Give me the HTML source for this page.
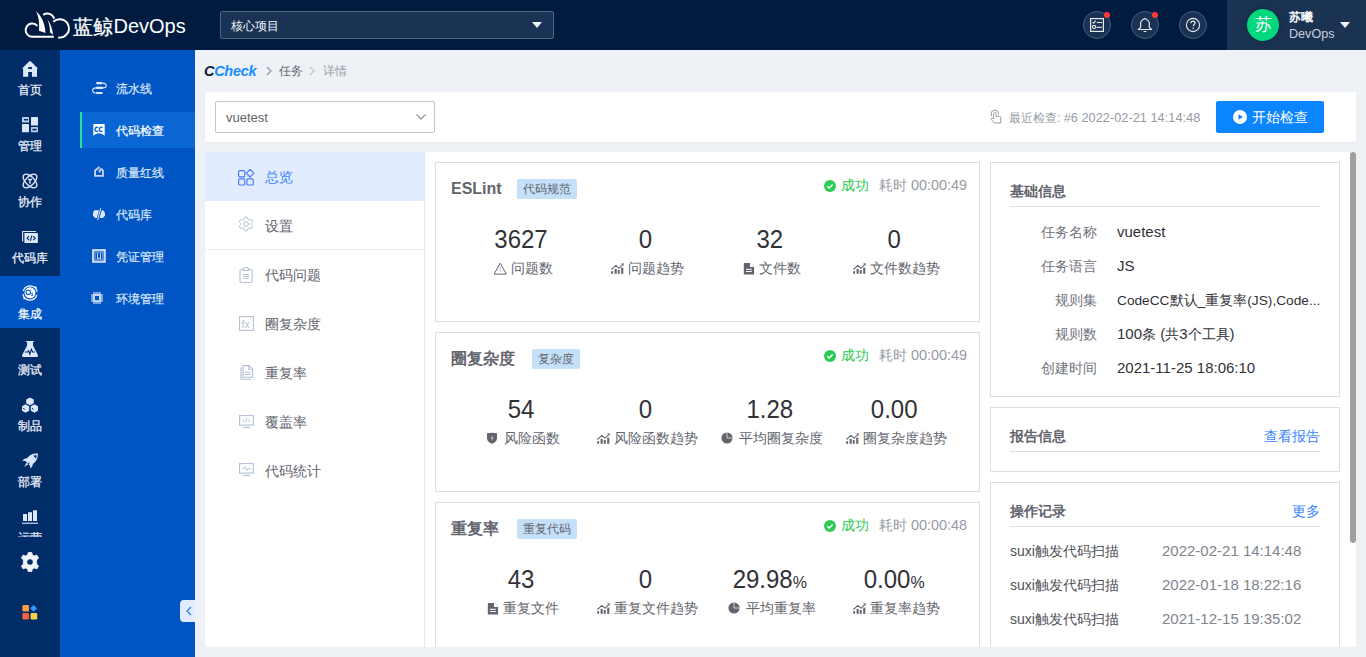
<!DOCTYPE html>
<html><head><meta charset="utf-8">
<style>
*{box-sizing:border-box;margin:0;padding:0}
html,body{width:1366px;height:657px;overflow:hidden}
body{position:relative;background:#eef1f5;font-family:"Liberation Sans",sans-serif;color:#63656e}
.a{position:absolute}
svg{display:block}
#hdr{left:0;top:0;width:1366px;height:50px;background:#001b3f}
#nav{left:0;top:50px;width:60px;height:607px;background:#002c67}
#sub{left:60px;top:50px;width:135px;height:607px;background:#0055c5}
.ni{left:0;width:60px;height:56px;text-align:center}
.ni .lb{position:absolute;left:0;width:60px;top:30px;line-height:20px;font-size:12px;color:#eef3fc;-webkit-text-stroke:0.25px #eef3fc}
.ni svg{position:absolute;left:22px;top:11px}
.si{left:20px;width:115px;height:36px;font-size:12px;line-height:36px;color:#dde8fa}
.si .t{-webkit-text-stroke:0.2px currentColor}
.si .t{position:absolute;left:36px;top:1px}
.si svg{position:absolute;left:12px;top:11px}
</style></head>
<body>
<!-- header -->
<div class="a" id="hdr">
  <svg class="a" style="left:22px;top:8px" width="50" height="34" viewBox="0 0 50 34">
    <path d="M15.4 17.9 A6.6 6.6 0 1 0 10.4 28.7 L31.8 28.7" fill="none" stroke="#fff" stroke-width="1.9"/>
    <path d="M31.3 13.8 A9.2 9.2 0 1 1 36.2 29.5" fill="none" stroke="#fff" stroke-width="1.9"/>
    <path d="M21.2 6.8 C25 4.6 30.5 5.2 32.2 10.6" fill="none" stroke="#fff" stroke-width="2"/>
    <path d="M14 3.6 C19 7 23 15 23.5 25 L17 22.8 C17.5 16 17 9 14 3.6 Z" fill="#fff"/>
    <path d="M25.1 11.1 C28.5 15 30.5 21 31 26.9 L28 24.3 C28 19 27 14.5 25.1 11.1 Z" fill="#fff"/>
  </svg>
  <div class="a" style="left:73px;top:15px;font-size:19.5px;line-height:24px;color:#fff;white-space:nowrap;-webkit-text-stroke:0.3px #fff">蓝鲸</div><div class="a" style="left:113.5px;top:14px;font-size:20px;line-height:24px;color:#fff;white-space:nowrap">DevOps</div>
  <div class="a" style="left:220px;top:11px;width:334px;height:28px;border:1px solid #53657e;border-radius:2px;background:#1a3253"></div>
  <div class="a" style="left:231px;top:16px;font-size:12px;line-height:20px;color:#f0f4fa">核心项目</div>
  <div class="a" style="left:532px;top:22px;width:0;height:0;border-left:5px solid transparent;border-right:5px solid transparent;border-top:6px solid #f0f4fa"></div>
  <!-- icons -->
  <div class="a" style="left:1083px;top:11px;width:28px;height:28px;border-radius:50%;border:1px solid #4a5d78;background:#1a3253"></div>
  <div class="a" style="left:1131px;top:11px;width:28px;height:28px;border-radius:50%;border:1px solid #4a5d78;background:#1a3253"></div>
  <div class="a" style="left:1179px;top:11px;width:28px;height:28px;border-radius:50%;border:1px solid #4a5d78;background:#1a3253"></div>
  <svg class="a" style="left:1089px;top:17px" width="16" height="16" viewBox="0 0 16 16">
    <rect x="1.6" y="1.6" width="12.8" height="12.8" fill="none" stroke="#e6e9ee" stroke-width="1.2"/>
    <path d="M3.5 5 L4.6 6.2 L6.8 3.6" fill="none" stroke="#e6e9ee" stroke-width="1.1"/>
    <line x1="7.8" y1="5.5" x2="13" y2="5.5" stroke="#e6e9ee" stroke-width="1.1"/>
    <circle cx="5" cy="10" r="1.6" fill="none" stroke="#e6e9ee" stroke-width="1.1"/>
    <line x1="7.3" y1="10.3" x2="13" y2="10.3" stroke="#e6e9ee" stroke-width="1.1"/>
  </svg>
  <svg class="a" style="left:1137px;top:17px" width="16" height="16" viewBox="0 0 16 16"><path d="M7.9 1.4 C6.2 2.6 4.2 3.4 3.6 5.6 V10.4 L1.4 12.5 H14.6 L12.3 10.4 V5.6 C11.7 3.4 9.7 2.6 7.9 1.4 Z" fill="none" stroke="#e6e9ee" stroke-width="1.2" stroke-linejoin="round"/><path d="M6.2 14 C6.7 15.3 9.3 15.3 9.8 14 Z" fill="#e6e9ee"/></svg>
  <svg class="a" style="left:1185px;top:17px" width="16" height="16" viewBox="0 0 16 16">
    <circle cx="8" cy="8" r="6.6" fill="none" stroke="#e6e9ee" stroke-width="1.1"/>
    <path d="M6 6.3 C6 4.9 7 4.2 8 4.2 C9.2 4.2 10 5 10 6 C10 7.3 8.3 7.5 8.3 9.2" fill="none" stroke="#e6e9ee" stroke-width="1.2"/>
    <circle cx="8.2" cy="11.3" r="0.8" fill="#e6e9ee"/>
  </svg>
  <div class="a" style="left:1104px;top:12px;width:6px;height:6px;border-radius:50%;background:#ff3a3a"></div>
  <div class="a" style="left:1152px;top:12px;width:6px;height:6px;border-radius:50%;background:#ff3a3a"></div>
  <!-- user -->
  <div class="a" style="left:1227px;top:0;width:139px;height:50px;background:#1b3353"></div>
  <div class="a" style="left:1247px;top:9px;width:32px;height:32px;border-radius:50%;background:#00d87e;box-shadow:0 0 6px rgba(0,0,0,.25);color:#fff;font-size:17px;line-height:32px;text-align:center">苏</div>
  <div class="a" style="left:1289px;top:8px;font-size:12px;line-height:18px;color:#fff;font-weight:bold">苏曦</div>
  <div class="a" style="left:1289px;top:25px;font-size:12.6px;line-height:18px;color:#c8d0db">DevOps</div>
  <div class="a" style="left:1340px;top:22px;width:0;height:0;border-left:5px solid transparent;border-right:5px solid transparent;border-top:6px solid #f0f4fa"></div>
</div>

<!-- left icon nav -->
<div class="a" id="nav">
  <div class="a" style="left:0;top:226px;width:60px;height:52px;background:#0055c5"></div>
  <div style="position:absolute;left:0;top:0;width:60px;height:487px;overflow:hidden">
    <div class="a ni" style="top:0">
      <svg width="16" height="16" viewBox="0 0 16 16"><path d="M8 -0.3 L16 7.6 H15 V15.8 H10 V11 H6.2 V15.8 H1.1 V7.6 H0 Z" fill="#dce7fb"/><rect x="6.2" y="6.1" width="3.8" height="1.9" fill="#002c67"/></svg>
      <div class="lb">首页</div>
    </div>
    <div class="a ni" style="top:56px">
      <svg width="16" height="16" viewBox="0 0 16 16"><rect x="0" y="0" width="7" height="5.6" rx="0.6" fill="#dce7fb" opacity="0.85"/><rect x="2" y="2" width="4" height="1.4" fill="#002c67"/><rect x="9" y="0" width="7" height="8.6" rx="0.6" fill="#dce7fb"/><rect x="0" y="7" width="7" height="8.3" rx="0.6" fill="#dce7fb"/><rect x="9" y="10" width="7" height="5.3" rx="0.6" fill="#dce7fb" opacity="0.85"/><rect x="10.5" y="11.8" width="4" height="1.6" fill="#002c67"/></svg>
      <div class="lb">管理</div>
    </div>
    <div class="a ni" style="top:112px">
      <svg width="16" height="16" viewBox="0 0 16 16"><ellipse cx="8" cy="8" rx="8.6" ry="4.4" transform="rotate(45 8 8)" fill="none" stroke="#dce7fb" stroke-width="1.4"/><ellipse cx="8" cy="8" rx="8.6" ry="4.4" transform="rotate(-45 8 8)" fill="none" stroke="#dce7fb" stroke-width="1.4"/><path d="M6 6.5 H10 M8 6.5 V10.7" stroke="#dce7fb" stroke-width="1.4"/></svg>
      <div class="lb">协作</div>
    </div>
    <div class="a ni" style="top:168px">
      <svg width="16" height="16" viewBox="0 0 16 16"><path d="M0.6 12.5 V2.5 H14" fill="none" stroke="#dce7fb" stroke-width="1.1"/><rect x="2.4" y="4.1" width="13.5" height="9.9" rx="0.5" fill="#dce7fb"/><path d="M7 7.2 L5 9.2 L7 11.2 M11.2 7.2 L13.2 9.2 L11.2 11.2 M9.8 6.6 L8.4 11.8" fill="none" stroke="#002c67" stroke-width="1.1"/></svg>
      <div class="lb">代码库</div>
    </div>
    <div class="a ni" style="top:224px">
      <svg width="16" height="16" viewBox="0 0 16 16"><path d="M13.5 3.2 A7.3 7.3 0 0 0 1.2 6 M0.9 9.2 A7.3 7.3 0 0 0 2.5 12.8 M2.5 12.8 A7.3 7.3 0 0 0 14.8 10 M15.1 6.8 A7.3 7.3 0 0 0 13.5 3.2" fill="none" stroke="#fff" stroke-width="1.2"/><path d="M12 1.5 L14.6 1.6 L14.4 4.2 Z M4 14.3 L1.4 14.2 L1.6 11.6 Z" fill="#fff"/><circle cx="8" cy="7.8" r="5.5" fill="#fff"/><rect x="4.2" y="5.2" width="4.2" height="4.2" rx="1.4" fill="none" stroke="#0055c5" stroke-width="1.1"/><path d="M11 8.2 C10 7.8 9.2 8.2 9.5 8.9 C9.8 9.5 11 9.4 10.9 10.1 C10.8 10.8 9.8 10.8 9 10.4" fill="none" stroke="#0055c5" stroke-width="1"/></svg>
      <div class="lb" style="color:#fff">集成</div>
    </div>
    <div class="a ni" style="top:280px">
      <svg width="16" height="16" viewBox="0 0 16 16"><path d="M3.9 0.1 H11.9 V1 H11 V4.5 L15.6 13.5 C16.3 14.8 15.8 16 14.5 16 H1.5 C0.2 16 -0.3 14.8 0.4 13.5 L5.1 4.5 V1 H3.9 Z" fill="#dce7fb"/><path d="M2.9 11 H5.5 L6.6 9.8 L7.8 13.2 L9.4 8.2 L10.6 11 H12.8" fill="none" stroke="#002c67" stroke-width="1.1"/></svg>
      <div class="lb">测试</div>
    </div>
    <div class="a ni" style="top:336px">
      <svg width="16" height="16" viewBox="0 0 16 16"><path d="M8 0.4 L11.8 2.4 V6.2 L8 8.2 L4.2 6.2 V2.4 Z" fill="#dce7fb"/><path d="M3.6 7.3 L7.2 9.3 V13.7 L3.6 15.8 L0 13.7 V9.3 Z" fill="#dce7fb"/><path d="M12.4 7.3 L16 9.3 V13.7 L12.4 15.8 L8.8 13.7 V9.3 Z" fill="#dce7fb"/><path d="M1.3 11 L2.6 12.6" stroke="#002c67" stroke-width="1"/><path d="M10.1 11 L11.4 12.6" stroke="#002c67" stroke-width="1"/></svg>
      <div class="lb">制品</div>
    </div>
    <div class="a ni" style="top:392px">
      <svg width="16" height="16" viewBox="0 0 16 16"><path d="M15.8 0.6 C11.5 0 7.5 1.8 5 5.2 L3.2 5.5 L0 7.6 L3.8 8.2 L7.8 12.2 L8.5 15.8 L10.5 12.7 L10.9 11 C14.2 8.5 16.2 4.8 15.8 0.6 Z" fill="#dce7fb"/><path d="M11.3 2.8 C12.4 2.4 13.6 2.3 14.6 2.3 C14.6 3.3 14.4 4.4 14 5.4 Z" fill="#002c67"/><path d="M4.8 9.5 L2.2 13.8 L6.5 11.2 Z" fill="#dce7fb"/><path d="M7.3 9.5 L6.2 11" stroke="#002c67" stroke-width="1"/></svg>
      <div class="lb">部署</div>
    </div>
    <div class="a ni" style="top:448px">
      <svg width="16" height="16" viewBox="0 0 16 16"><rect x="1" y="5" width="4" height="7" fill="#dce7fb"/><rect x="6" y="3.2" width="4" height="8.8" fill="#dce7fb"/><rect x="11" y="1.3" width="4" height="10.7" fill="#dce7fb"/><rect x="0" y="13.6" width="16" height="1.4" fill="#dce7fb" opacity="0.8"/></svg>
      <div class="lb">运营</div>
    </div>
  </div>
  <svg class="a" style="left:20px;top:502px" width="20" height="20" viewBox="0 0 20 20"><path d="M8.3 0.2 H11.7 L12.3 2.8 L14.4 4 L16.9 3.1 L18.6 6.1 L16.6 7.9 V12.1 L18.6 13.9 L16.9 16.9 L14.4 16 L12.3 17.2 L11.7 19.8 H8.3 L7.7 17.2 L5.6 16 L3.1 16.9 L1.4 13.9 L3.4 12.1 V7.9 L1.4 6.1 L3.1 3.1 L5.6 4 L7.7 2.8 Z" fill="#eef3fc" stroke="#eef3fc" stroke-width="0.8" stroke-linejoin="round"/><circle cx="10" cy="10" r="2.8" fill="#002c67"/></svg>
  <svg class="a" style="left:22px;top:555px" width="16" height="15" viewBox="0 0 16 15">
    <rect x="0.4" y="0" width="6.6" height="6.6" rx="1.3" fill="#ff9a47"/>
    <rect x="9.1" y="0.9" width="5" height="5" rx="1" transform="rotate(45 11.6 3.4)" fill="#2b9bf4"/>
    <rect x="0.4" y="8" width="6.6" height="6.6" rx="1.3" fill="#f8603f"/>
    <rect x="8.6" y="8" width="6.6" height="6.6" rx="1.3" fill="#ffd146"/>
  </svg>
</div>

<!-- sub nav -->
<div class="a" id="sub">
  <div class="a si" style="top:20px">
    <svg width="15" height="15" viewBox="0 0 15 15" style="left:11.5px;top:11px"><path d="M5.1 2.1 H9.6 M4.8 6.9 H10.2 M4.7 12 H9.8" stroke="#dde8fa" stroke-width="2.2" stroke-linecap="round"/><path d="M10.5 2.1 C13 2.1 14.2 3.2 14.2 4.5 C14.2 5.8 13 6.9 11 6.9 M4 6.9 C1.8 6.9 0.6 8.1 0.6 9.45 C0.6 10.8 1.8 12 3.6 12" fill="none" stroke="#dde8fa" stroke-width="1.1"/></svg>
    <span class="t">流水线</span>
  </div>
  <div class="a si" style="top:62px;background:#0a66d3;color:#fff">
    <div class="a" style="left:0;top:0;width:2px;height:36px;background:#20e3a1"></div>
    <svg width="12" height="12" viewBox="0 0 12 12" style="left:13px;top:12px"><path d="M0.3 0.8 C0.3 0.3 0.6 0 1 0 H11 C11.4 0 11.7 0.3 11.7 0.8 V11.8 L9.5 10.3 C7.2 9 4.8 9 2.5 10.3 L0.3 11.8 Z" fill="#fff"/><path d="M5.2 3.6 C3.2 2.8 2 3.8 2 5.4 C2 7 3.2 8 5.2 7.2 M9.5 3.6 C7.5 2.8 6.3 3.8 6.3 5.4 C6.3 7 7.5 8 9.5 7.2" fill="none" stroke="#0a66d3" stroke-width="1.4"/></svg>
    <span class="t">代码检查</span>
  </div>
  <div class="a si" style="top:104px">
    <svg width="14" height="14" viewBox="0 0 14 14" style="left:12px;top:11px"><path d="M3.1 11.2 V5.4 L7.6 2.1" fill="none" stroke="#c9d8f2" stroke-width="1.8"/><path d="M2.2 10.9 H10.95 V5.3 L9.3 3.9 L7.6 5.6 V7.6" fill="none" stroke="#c9d8f2" stroke-width="1.8"/></svg>
    <span class="t">质量红线</span>
  </div>
  <div class="a si" style="top:146px">
    <svg width="14" height="14" viewBox="0 0 14 14" style="left:12px;top:11px"><path d="M2.4 3.2 L11 3.2 L13 5.8 V8.6 L11 11 H3 L1 8.6 V5.8 Z" fill="#dde8fa"/><path d="M9.2 0.6 L5.4 13.6" stroke="#0055c5" stroke-width="2.6"/><path d="M8.8 1.2 L5.6 13" stroke="#dde8fa" stroke-width="1"/></svg>
    <span class="t">代码库</span>
  </div>
  <div class="a si" style="top:188px">
    <svg width="14" height="14" viewBox="0 0 14 14" style="left:12px;top:11px"><rect x="1.2" y="1.2" width="11.5" height="11.5" fill="none" stroke="#c9d8f2" stroke-width="2.3"/><rect x="3.3" y="3.3" width="7.3" height="7.3" fill="none" stroke="#c9d8f2" stroke-width="0.8" opacity="0.5"/><path d="M5.5 3.5 V10 L7 9 L8.5 10 V3.5" fill="none" stroke="#c9d8f2" stroke-width="1"/></svg>
    <span class="t">凭证管理</span>
  </div>
  <div class="a si" style="top:230px">
    <svg width="14" height="14" viewBox="0 0 14 14" style="left:11px;top:12px"><path d="M2 0 H10 V2 H12 V10 H10 V12 H2 V10 H0 V2 H2 Z" fill="#c9d8f2" opacity="0.6"/><rect x="2" y="2" width="8" height="8" fill="#c9d8f2"/><rect x="4" y="4" width="4" height="4.2" fill="#0055c5"/></svg>
    <span class="t">环境管理</span>
  </div>
  <div class="a" style="left:120px;top:550px;width:15px;height:22px;border-radius:4px 0 0 4px;background:#e1ecff"></div>
  <svg class="a" style="left:125px;top:556px" width="8" height="10" viewBox="0 0 8 10"><path d="M6 1 L2 5 L6 9" fill="none" stroke="#3a84ff" stroke-width="1.4"/></svg>
</div>

<!-- breadcrumb -->
<div class="a" style="left:204px;top:61px;font-size:14.5px;line-height:20px;font-weight:bold;font-style:italic;white-space:nowrap;letter-spacing:-0.3px"><span style="color:#0b1d3e">C</span><span style="color:#1a8cff">Check</span></div>
<svg class="a" style="left:265px;top:66px" width="8" height="10" viewBox="0 0 8 10"><path d="M2 1 L6 5 L2 9" fill="none" stroke="#979ba5" stroke-width="1.3"/></svg>
<div class="a" style="left:279px;top:61px;font-size:12px;line-height:20px;color:#63656e">任务</div>
<svg class="a" style="left:308px;top:66px" width="8" height="10" viewBox="0 0 8 10"><path d="M2 1 L6 5 L2 9" fill="none" stroke="#c4c6cc" stroke-width="1.3"/></svg>
<div class="a" style="left:323px;top:61px;font-size:12px;line-height:20px;color:#979ba5">详情</div>

<!-- top white bar -->
<div class="a" style="left:205px;top:92px;width:1151px;height:50px;background:#fff;box-shadow:0 1px 2px rgba(0,0,0,.04)"></div>
<div class="a" style="left:215px;top:101px;width:220px;height:32px;border:1px solid #c4c6cc;border-radius:2px;background:#fff"></div>
<div class="a" style="left:226px;top:108px;font-size:13px;line-height:20px;color:#63656e">vuetest</div>
<svg class="a" style="left:415px;top:113px" width="12" height="8" viewBox="0 0 12 8"><path d="M1.5 1.5 L6 6 L10.5 1.5" fill="none" stroke="#979ba5" stroke-width="1.3"/></svg>
<svg class="a" style="left:985px;top:104px" width="24" height="24" viewBox="0 0 24 24"><path d="M6.4 12.2 V9.2 C6.4 7.2 7.9 6.3 9.9 6.3 C12 6.3 13.4 7.3 13.4 9.3 V10.6" fill="none" stroke="#979ba5" stroke-width="1"/><path d="M8.6 14.6 V9.8 C8.6 8.8 9.2 8.3 9.9 8.3 C10.6 8.3 11.1 8.8 11.1 9.8 V12.3 H14.6 C15.3 12.3 15.7 12.7 15.7 13.4 V19 H9.2 L6.3 15.4 C6 15 6.1 14.4 6.7 14.3 C7.3 14.2 8 14.3 8.6 14.8" fill="none" stroke="#979ba5" stroke-width="1" stroke-linejoin="round"/></svg>
<div class="a" style="left:1009px;top:108px;font-size:12px;line-height:20px;color:#979ba5;white-space:nowrap">最近检查: <span style="font-size:12.8px">#6 2022-02-21 14:14:48</span></div>
<div class="a" style="left:1216px;top:101px;width:108px;height:32px;border-radius:2px;background:#0b84ff"></div>
<svg class="a" style="left:1233px;top:110px" width="14" height="14" viewBox="0 0 14 14"><circle cx="7" cy="7" r="7" fill="#fff"/><path d="M5.5 4.2 L9.8 7 L5.5 9.8 Z" fill="#0b84ff"/></svg>
<div class="a" style="left:1252px;top:107px;font-size:14px;line-height:20px;color:#fff">开始检查</div>

<!-- white container -->
<div class="a" style="left:205px;top:152px;width:1151px;height:495px;background:#fff"></div>
<div class="a" style="left:424px;top:152px;width:1px;height:495px;background:#e6e8ee"></div>
<div class="a" style="left:205px;top:152px;width:219px;height:49px;background:#e1ecff"></div>
<div class="a" style="left:205px;top:249px;width:219px;height:1px;background:#e9ebf0"></div>
<svg class="a" style="left:238px;top:169px" width="17" height="17" viewBox="0 0 17 17"><rect x="0.6" y="1.6" width="6.2" height="6.2" rx="1" fill="none" stroke="#4a7af5" stroke-width="1.15"/><rect x="0.6" y="9.8" width="6.2" height="6.2" rx="1" fill="none" stroke="#4a7af5" stroke-width="1.15"/><rect x="9" y="9.8" width="6.2" height="6.2" rx="1" fill="none" stroke="#4a7af5" stroke-width="1.15"/><path d="M12.1 0.4 L15.9 4.2 L12.1 8 L8.3 4.2 Z" fill="none" stroke="#4a7af5" stroke-width="1.15" stroke-linejoin="round"/></svg><div class="a" style="left:265px;top:167px;font-size:14px;line-height:20px;color:#3a84ff">总览</div>
<svg class="a" style="left:238px;top:216px" width="16" height="16" viewBox="0 0 16 16"><path d="M6.6 1.2 H9.4 L9.9 3.2 L11.4 4.1 L13.4 3.5 L14.8 5.9 L13.3 7.3 V8.7 L14.8 10.1 L13.4 12.5 L11.4 11.9 L9.9 12.8 L9.4 14.8 H6.6 L6.1 12.8 L4.6 11.9 L2.6 12.5 L1.2 10.1 L2.7 8.7 V7.3 L1.2 5.9 L2.6 3.5 L4.6 4.1 L6.1 3.2 Z" fill="none" stroke="#b4bfd3" stroke-width="1" stroke-linejoin="round"/><circle cx="8" cy="8" r="2.4" fill="none" stroke="#b4bfd3" stroke-width="1"/></svg><div class="a" style="left:265px;top:216px;font-size:14px;line-height:20px;color:#63656e">设置</div>
<svg class="a" style="left:239px;top:267px" width="14" height="16" viewBox="0 0 14 16"><rect x="1" y="2.5" width="12" height="13" rx="1.5" fill="none" stroke="#b4bfd3" stroke-width="1.1"/><path d="M4.5 3.5 V2 C4.5 1 5.5 0.5 7 0.5 C8.5 0.5 9.5 1 9.5 2 V3.5 Z" fill="#fff" stroke="#b4bfd3" stroke-width="1.1"/><path d="M4 7.5 H10 M4 9.5 H10 M4 11.5 H10" stroke="#b4bfd3" stroke-width="1"/></svg><div class="a" style="left:265px;top:265px;font-size:14px;line-height:20px;color:#63656e">代码问题</div>
<svg class="a" style="left:239px;top:316px" width="15" height="15" viewBox="0 0 15 15"><rect x="0.6" y="0.6" width="13.8" height="13.8" fill="none" stroke="#b4bfd3" stroke-width="1.1"/><text x="2.6" y="11.6" font-size="10.5" font-family="Liberation Sans" fill="#b4bfd3">fx</text></svg><div class="a" style="left:265px;top:314px;font-size:14px;line-height:20px;color:#63656e">圈复杂度</div>
<svg class="a" style="left:240px;top:365px" width="14" height="15" viewBox="0 0 14 15"><path d="M1 2.5 V14.2 H11" fill="none" stroke="#b4bfd3" stroke-width="1.1"/><path d="M3 0.6 H9 L12.6 4 V12.3 H3 Z" fill="none" stroke="#b4bfd3" stroke-width="1.1"/><path d="M8.6 0.8 V4.4 H12.4" fill="none" stroke="#b4bfd3" stroke-width="1"/><path d="M5 7.3 H10.6 M5 9.5 H10.6" stroke="#b4bfd3" stroke-width="1"/></svg><div class="a" style="left:265px;top:363px;font-size:14px;line-height:20px;color:#63656e">重复率</div>
<svg class="a" style="left:239px;top:415px" width="15" height="14" viewBox="0 0 15 14"><rect x="0.6" y="0.6" width="13.8" height="9.5" fill="none" stroke="#b4bfd3" stroke-width="1.1"/><path d="M5.5 3.5 L4 5.3 L5.5 7 M9.5 3.5 L11 5.3 L9.5 7 M8.1 3 L6.9 7.6" fill="none" stroke="#b4bfd3" stroke-width="0.9"/><path d="M4 12.5 H11" stroke="#b4bfd3" stroke-width="1.2"/></svg><div class="a" style="left:265px;top:412px;font-size:14px;line-height:20px;color:#63656e">覆盖率</div>
<svg class="a" style="left:239px;top:463px" width="15" height="14" viewBox="0 0 15 14"><rect x="0.6" y="0.6" width="13.8" height="9.5" fill="none" stroke="#b4bfd3" stroke-width="1.1"/><path d="M3 5.5 H5.5 L6.5 3.5 L8 7.5 L9 5.5 H12" fill="none" stroke="#b4bfd3" stroke-width="0.9"/><path d="M4 12.5 H11" stroke="#b4bfd3" stroke-width="1.2"/></svg><div class="a" style="left:265px;top:461px;font-size:14px;line-height:20px;color:#63656e">代码统计</div>

<div class="a" style="left:435px;top:162px;width:545px;height:160px;border:1px solid #dcdee5"></div>
<div class="a" style="left:451px;top:178px;font-size:16px;font-weight:bold;line-height:22px;color:#63656e;white-space:nowrap">ESLint</div>
<div class="a" style="left:517px;top:179px;width:60px;height:20px;border-radius:2px;background:#c5e1f9;font-size:12px;line-height:20px;text-align:center;color:#63656e">代码规范</div>
<svg class="a" style="left:824px;top:180px" width="12" height="12" viewBox="0 0 12 12"><circle cx="6" cy="6" r="6" fill="#2dcb56"/><path d="M3.3 6.2 L5.2 8 L8.7 4.5" fill="none" stroke="#fff" stroke-width="1.3"/></svg>
<div class="a" style="left:841px;top:175px;font-size:14px;line-height:20px;color:#2dcb56">成功</div>
<div class="a" style="left:879px;top:175px;font-size:14px;line-height:20px;color:#979ba5;white-space:nowrap">耗时 <span style="font-size:14.4px">00:00:49</span></div>
<div class="a" style="left:459.0px;top:224px;width:124px;text-align:center;font-size:24px;line-height:30px;color:#313238;white-space:nowrap;transform:scaleY(1.08)">3627<span style="font-size:16px"></span></div>
<div class="a" style="left:461.0px;top:258px;width:124px;text-align:center;font-size:14px;line-height:20px;color:#63656e;white-space:nowrap"><span style="display:inline-block;vertical-align:-2px;margin-right:4px"><svg width="13" height="13" viewBox="0 0 13 13"><path d="M6.2 1.2 L12.3 12.1 H0.1 Z" fill="none" stroke="#63656e" stroke-width="1" stroke-linejoin="round"/><path d="M6.2 4.6 V9.4" stroke="#63656e" stroke-width="0.7" opacity="0.6"/></svg></span>问题数</div>
<div class="a" style="left:583.4px;top:224px;width:124px;text-align:center;font-size:24px;line-height:30px;color:#313238;white-space:nowrap;transform:scaleY(1.08)">0<span style="font-size:16px"></span></div>
<div class="a" style="left:585.4px;top:258px;width:124px;text-align:center;font-size:14px;line-height:20px;color:#63656e;white-space:nowrap"><span style="display:inline-block;vertical-align:-1px;margin-right:4px"><svg width="13" height="12" viewBox="0 0 13 12"><path d="M0.4 7.5 L4.9 3.4 L8 6.3 L11.6 2.7" fill="none" stroke="#63656e" stroke-width="1.1"/><path d="M10.2 1.6 L12.8 1.2 L12.4 3.9 Z" fill="#63656e"/><rect x="0.2" y="9.2" width="1.9" height="2.6" fill="#63656e"/><rect x="3.6" y="6.9" width="2.1" height="4.9" fill="#63656e"/><rect x="6.8" y="8" width="1.9" height="3.8" fill="#63656e"/><rect x="10.2" y="5.6" width="2.1" height="6.2" fill="#63656e"/></svg></span>问题趋势</div>
<div class="a" style="left:707.8px;top:224px;width:124px;text-align:center;font-size:24px;line-height:30px;color:#313238;white-space:nowrap;transform:scaleY(1.08)">32<span style="font-size:16px"></span></div>
<div class="a" style="left:709.8px;top:258px;width:124px;text-align:center;font-size:14px;line-height:20px;color:#63656e;white-space:nowrap"><span style="display:inline-block;vertical-align:-2px;margin-right:4px"><svg width="12" height="13" viewBox="0 0 12 13"><path d="M0.8 1 H7.6 L11.1 4.5 V12.6 H0.8 Z" fill="#63656e"/><path d="M7 0.6 V5 H11.4" fill="#fff"/><path d="M3 7.3 H8.8 M3 9.5 H8.8" stroke="#fff" stroke-width="1"/></svg></span>文件数</div>
<div class="a" style="left:832.2px;top:224px;width:124px;text-align:center;font-size:24px;line-height:30px;color:#313238;white-space:nowrap;transform:scaleY(1.08)">0<span style="font-size:16px"></span></div>
<div class="a" style="left:834.2px;top:258px;width:124px;text-align:center;font-size:14px;line-height:20px;color:#63656e;white-space:nowrap"><span style="display:inline-block;vertical-align:-1px;margin-right:4px"><svg width="13" height="12" viewBox="0 0 13 12"><path d="M0.4 7.5 L4.9 3.4 L8 6.3 L11.6 2.7" fill="none" stroke="#63656e" stroke-width="1.1"/><path d="M10.2 1.6 L12.8 1.2 L12.4 3.9 Z" fill="#63656e"/><rect x="0.2" y="9.2" width="1.9" height="2.6" fill="#63656e"/><rect x="3.6" y="6.9" width="2.1" height="4.9" fill="#63656e"/><rect x="6.8" y="8" width="1.9" height="3.8" fill="#63656e"/><rect x="10.2" y="5.6" width="2.1" height="6.2" fill="#63656e"/></svg></span>文件数趋势</div>
<div class="a" style="left:435px;top:332px;width:545px;height:160px;border:1px solid #dcdee5"></div>
<div class="a" style="left:451px;top:348px;font-size:16px;font-weight:bold;line-height:22px;color:#63656e;white-space:nowrap">圈复杂度</div>
<div class="a" style="left:532px;top:349px;width:48px;height:20px;border-radius:2px;background:#c5e1f9;font-size:12px;line-height:20px;text-align:center;color:#63656e">复杂度</div>
<svg class="a" style="left:824px;top:350px" width="12" height="12" viewBox="0 0 12 12"><circle cx="6" cy="6" r="6" fill="#2dcb56"/><path d="M3.3 6.2 L5.2 8 L8.7 4.5" fill="none" stroke="#fff" stroke-width="1.3"/></svg>
<div class="a" style="left:841px;top:345px;font-size:14px;line-height:20px;color:#2dcb56">成功</div>
<div class="a" style="left:879px;top:345px;font-size:14px;line-height:20px;color:#979ba5;white-space:nowrap">耗时 <span style="font-size:14.4px">00:00:49</span></div>
<div class="a" style="left:459.0px;top:394px;width:124px;text-align:center;font-size:24px;line-height:30px;color:#313238;white-space:nowrap;transform:scaleY(1.08)">54<span style="font-size:16px"></span></div>
<div class="a" style="left:461.0px;top:428px;width:124px;text-align:center;font-size:14px;line-height:20px;color:#63656e;white-space:nowrap"><span style="display:inline-block;vertical-align:-1px;margin-right:6px"><svg width="12" height="12" viewBox="0 0 12 12"><path d="M1 1.2 C4 0.5 8 0.5 11 1.2 V6.5 C11 9 8.5 10.8 6 11.8 C3.5 10.8 1 9 1 6.5 Z" fill="#63656e"/><path d="M6.6 3.2 L4.8 6.3 H6.2 L5.6 8.8 L7.4 5.7 H6 Z" fill="#fff"/></svg></span>风险函数</div>
<div class="a" style="left:583.4px;top:394px;width:124px;text-align:center;font-size:24px;line-height:30px;color:#313238;white-space:nowrap;transform:scaleY(1.08)">0<span style="font-size:16px"></span></div>
<div class="a" style="left:585.4px;top:428px;width:124px;text-align:center;font-size:14px;line-height:20px;color:#63656e;white-space:nowrap"><span style="display:inline-block;vertical-align:-1px;margin-right:4px"><svg width="13" height="12" viewBox="0 0 13 12"><path d="M0.4 7.5 L4.9 3.4 L8 6.3 L11.6 2.7" fill="none" stroke="#63656e" stroke-width="1.1"/><path d="M10.2 1.6 L12.8 1.2 L12.4 3.9 Z" fill="#63656e"/><rect x="0.2" y="9.2" width="1.9" height="2.6" fill="#63656e"/><rect x="3.6" y="6.9" width="2.1" height="4.9" fill="#63656e"/><rect x="6.8" y="8" width="1.9" height="3.8" fill="#63656e"/><rect x="10.2" y="5.6" width="2.1" height="6.2" fill="#63656e"/></svg></span>风险函数趋势</div>
<div class="a" style="left:707.8px;top:394px;width:124px;text-align:center;font-size:24px;line-height:30px;color:#313238;white-space:nowrap;transform:scaleY(1.08)">1.28<span style="font-size:16px"></span></div>
<div class="a" style="left:709.8px;top:428px;width:124px;text-align:center;font-size:14px;line-height:20px;color:#63656e;white-space:nowrap"><span style="display:inline-block;vertical-align:-1px;margin-right:6px"><svg width="12" height="12" viewBox="0 0 12 12"><circle cx="6" cy="6" r="5.6" fill="#63656e"/><path d="M6 0.4 V6 H11.6" fill="none" stroke="#fff" stroke-width="0.7"/></svg></span>平均圈复杂度</div>
<div class="a" style="left:832.2px;top:394px;width:124px;text-align:center;font-size:24px;line-height:30px;color:#313238;white-space:nowrap;transform:scaleY(1.08)">0.00<span style="font-size:16px"></span></div>
<div class="a" style="left:834.2px;top:428px;width:124px;text-align:center;font-size:14px;line-height:20px;color:#63656e;white-space:nowrap"><span style="display:inline-block;vertical-align:-1px;margin-right:4px"><svg width="13" height="12" viewBox="0 0 13 12"><path d="M0.4 7.5 L4.9 3.4 L8 6.3 L11.6 2.7" fill="none" stroke="#63656e" stroke-width="1.1"/><path d="M10.2 1.6 L12.8 1.2 L12.4 3.9 Z" fill="#63656e"/><rect x="0.2" y="9.2" width="1.9" height="2.6" fill="#63656e"/><rect x="3.6" y="6.9" width="2.1" height="4.9" fill="#63656e"/><rect x="6.8" y="8" width="1.9" height="3.8" fill="#63656e"/><rect x="10.2" y="5.6" width="2.1" height="6.2" fill="#63656e"/></svg></span>圈复杂度趋势</div>
<div class="a" style="left:435px;top:502px;width:545px;height:160px;border:1px solid #dcdee5"></div>
<div class="a" style="left:451px;top:518px;font-size:16px;font-weight:bold;line-height:22px;color:#63656e;white-space:nowrap">重复率</div>
<div class="a" style="left:517px;top:519px;width:60px;height:20px;border-radius:2px;background:#c5e1f9;font-size:12px;line-height:20px;text-align:center;color:#63656e">重复代码</div>
<svg class="a" style="left:824px;top:520px" width="12" height="12" viewBox="0 0 12 12"><circle cx="6" cy="6" r="6" fill="#2dcb56"/><path d="M3.3 6.2 L5.2 8 L8.7 4.5" fill="none" stroke="#fff" stroke-width="1.3"/></svg>
<div class="a" style="left:841px;top:515px;font-size:14px;line-height:20px;color:#2dcb56">成功</div>
<div class="a" style="left:879px;top:515px;font-size:14px;line-height:20px;color:#979ba5;white-space:nowrap">耗时 <span style="font-size:14.4px">00:00:48</span></div>
<div class="a" style="left:459.0px;top:564px;width:124px;text-align:center;font-size:24px;line-height:30px;color:#313238;white-space:nowrap;transform:scaleY(1.08)">43<span style="font-size:16px"></span></div>
<div class="a" style="left:461.0px;top:598px;width:124px;text-align:center;font-size:14px;line-height:20px;color:#63656e;white-space:nowrap"><span style="display:inline-block;vertical-align:-2px;margin-right:4px"><svg width="12" height="13" viewBox="0 0 12 13"><path d="M0.8 1 H7.6 L11.1 4.5 V12.6 H0.8 Z" fill="#63656e"/><path d="M7 0.6 V5 H11.4" fill="#fff"/><path d="M3 7.3 H8.8 M3 9.5 H8.8" stroke="#fff" stroke-width="1"/></svg></span>重复文件</div>
<div class="a" style="left:583.4px;top:564px;width:124px;text-align:center;font-size:24px;line-height:30px;color:#313238;white-space:nowrap;transform:scaleY(1.08)">0<span style="font-size:16px"></span></div>
<div class="a" style="left:585.4px;top:598px;width:124px;text-align:center;font-size:14px;line-height:20px;color:#63656e;white-space:nowrap"><span style="display:inline-block;vertical-align:-1px;margin-right:4px"><svg width="13" height="12" viewBox="0 0 13 12"><path d="M0.4 7.5 L4.9 3.4 L8 6.3 L11.6 2.7" fill="none" stroke="#63656e" stroke-width="1.1"/><path d="M10.2 1.6 L12.8 1.2 L12.4 3.9 Z" fill="#63656e"/><rect x="0.2" y="9.2" width="1.9" height="2.6" fill="#63656e"/><rect x="3.6" y="6.9" width="2.1" height="4.9" fill="#63656e"/><rect x="6.8" y="8" width="1.9" height="3.8" fill="#63656e"/><rect x="10.2" y="5.6" width="2.1" height="6.2" fill="#63656e"/></svg></span>重复文件趋势</div>
<div class="a" style="left:707.8px;top:564px;width:124px;text-align:center;font-size:24px;line-height:30px;color:#313238;white-space:nowrap;transform:scaleY(1.08)">29.98<span style="font-size:16px">%</span></div>
<div class="a" style="left:709.8px;top:598px;width:124px;text-align:center;font-size:14px;line-height:20px;color:#63656e;white-space:nowrap"><span style="display:inline-block;vertical-align:-1px;margin-right:6px"><svg width="12" height="12" viewBox="0 0 12 12"><circle cx="6" cy="6" r="5.6" fill="#63656e"/><path d="M6 0.4 V6 H11.6" fill="none" stroke="#fff" stroke-width="0.7"/></svg></span>平均重复率</div>
<div class="a" style="left:832.2px;top:564px;width:124px;text-align:center;font-size:24px;line-height:30px;color:#313238;white-space:nowrap;transform:scaleY(1.08)">0.00<span style="font-size:16px">%</span></div>
<div class="a" style="left:834.2px;top:598px;width:124px;text-align:center;font-size:14px;line-height:20px;color:#63656e;white-space:nowrap"><span style="display:inline-block;vertical-align:-1px;margin-right:4px"><svg width="13" height="12" viewBox="0 0 13 12"><path d="M0.4 7.5 L4.9 3.4 L8 6.3 L11.6 2.7" fill="none" stroke="#63656e" stroke-width="1.1"/><path d="M10.2 1.6 L12.8 1.2 L12.4 3.9 Z" fill="#63656e"/><rect x="0.2" y="9.2" width="1.9" height="2.6" fill="#63656e"/><rect x="3.6" y="6.9" width="2.1" height="4.9" fill="#63656e"/><rect x="6.8" y="8" width="1.9" height="3.8" fill="#63656e"/><rect x="10.2" y="5.6" width="2.1" height="6.2" fill="#63656e"/></svg></span>重复率趋势</div>

<div class="a" style="left:990px;top:162px;width:350px;height:235px;border:1px solid #dcdee5"></div>
<div class="a" style="left:990px;top:407px;width:350px;height:65px;border:1px solid #dcdee5"></div>
<div class="a" style="left:990px;top:482px;width:350px;height:200px;border:1px solid #dcdee5"></div>
<div class="a" style="left:1010px;top:181px;font-size:14px;line-height:20px;font-weight:bold;color:#63656e">基础信息</div>
<div class="a" style="left:1010px;top:206px;width:310px;height:1px;background:#dcdee5"></div>
<div class="a" style="left:1010px;top:426px;font-size:14px;line-height:20px;font-weight:bold;color:#63656e">报告信息</div>
<div class="a" style="left:1220px;width:100px;text-align:right;top:426px;font-size:14px;line-height:20px;color:#3a84ff">查看报告</div>
<div class="a" style="left:1010px;top:451px;width:310px;height:1px;background:#dcdee5"></div>
<div class="a" style="left:1010px;top:501px;font-size:14px;line-height:20px;font-weight:bold;color:#63656e">操作记录</div>
<div class="a" style="left:1220px;width:100px;text-align:right;top:501px;font-size:14px;line-height:20px;color:#3a84ff">更多</div>
<div class="a" style="left:1010px;top:526px;width:310px;height:1px;background:#dcdee5"></div>
<div class="a" style="left:997px;width:100px;text-align:right;top:222px;font-size:14px;line-height:20px;color:#70747e">任务名称</div>
<div class="a" style="left:1117px;width:203px;overflow:hidden;text-overflow:ellipsis;white-space:nowrap;top:222px;font-size:14px;line-height:20px;color:#313238"><span style="font-size:15px">vuetest</span></div>
<div class="a" style="left:997px;width:100px;text-align:right;top:256px;font-size:14px;line-height:20px;color:#70747e">任务语言</div>
<div class="a" style="left:1117px;width:203px;overflow:hidden;text-overflow:ellipsis;white-space:nowrap;top:256px;font-size:14px;line-height:20px;color:#313238"><span style="font-size:15px">JS</span></div>
<div class="a" style="left:997px;width:100px;text-align:right;top:290px;font-size:14px;line-height:20px;color:#70747e">规则集</div>
<div class="a" style="left:1117px;width:220px;white-space:nowrap;top:290px;font-size:14px;line-height:20px;color:#313238;text-overflow:clip"><span style="font-size:13.7px">CodeCC</span>默认<span style="font-size:14px">_</span>重复率<span style="font-size:13.7px">(JS),Code...</span></div>
<div class="a" style="left:997px;width:100px;text-align:right;top:324px;font-size:14px;line-height:20px;color:#70747e">规则数</div>
<div class="a" style="left:1117px;width:203px;overflow:hidden;text-overflow:ellipsis;white-space:nowrap;top:324px;font-size:14px;line-height:20px;color:#313238"><span style="font-size:15px">100</span>条<span style="font-size:15px"> (</span>共<span style="font-size:15px">3</span>个工具<span style="font-size:15px">)</span></div>
<div class="a" style="left:997px;width:100px;text-align:right;top:358px;font-size:14px;line-height:20px;color:#70747e">创建时间</div>
<div class="a" style="left:1117px;width:203px;overflow:hidden;text-overflow:ellipsis;white-space:nowrap;top:358px;font-size:14px;line-height:20px;color:#313238"><span style="font-size:15px">2021-11-25 18:06:10</span></div>
<div class="a" style="left:1010px;top:541px;font-size:14px;line-height:20px;color:#4f5158;white-space:nowrap">suxi触发代码扫描</div>
<div class="a" style="left:1162px;top:541px;font-size:14px;line-height:20px;color:#80848e;white-space:nowrap;font-size:15px">2022-02-21 14:14:48</div>
<div class="a" style="left:1010px;top:575px;font-size:14px;line-height:20px;color:#4f5158;white-space:nowrap">suxi触发代码扫描</div>
<div class="a" style="left:1162px;top:575px;font-size:14px;line-height:20px;color:#80848e;white-space:nowrap;font-size:15px">2022-01-18 18:22:16</div>
<div class="a" style="left:1010px;top:609px;font-size:14px;line-height:20px;color:#4f5158;white-space:nowrap">suxi触发代码扫描</div>
<div class="a" style="left:1162px;top:609px;font-size:14px;line-height:20px;color:#80848e;white-space:nowrap;font-size:15px">2021-12-15 19:35:02</div>
<div class="a" style="left:1340px;top:152px;width:10px;height:495px;background:#fff"></div>
<div class="a" style="left:195px;top:647px;width:1171px;height:10px;background:#eef1f5"></div>

<div class="a" style="left:1350px;top:152px;width:6px;height:391px;border-radius:3px;background:#a0a0a0"></div>
</body></html>
